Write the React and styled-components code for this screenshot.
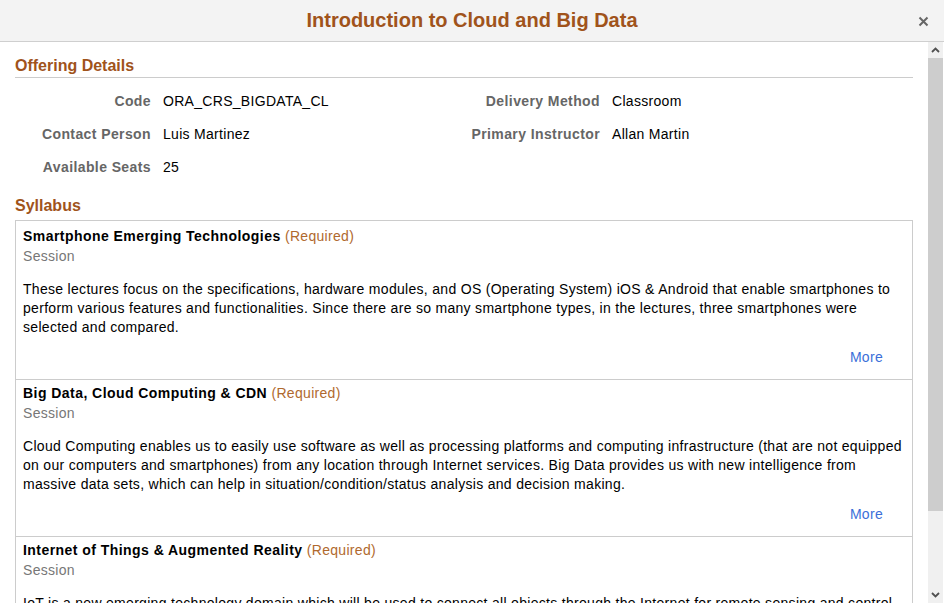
import React from "react";
import styled, { createGlobalStyle } from "styled-components";

const Global = createGlobalStyle`
  html, body { margin: 0; padding: 0; background: #fff; }
  body { font-family: "Liberation Sans", Arial, sans-serif; color: #000; }
`;

const Dialog = styled.div`
  width: 944px;
  height: 608px;
  display: flex;
  flex-direction: column;
  background: #fff;
  overflow: hidden;
`;

const Header = styled.div`
  position: relative;
  height: 41px;
  flex: none;
  background: #f3f3f3;
  border-bottom: 1px solid #cfcfcf;
  display: flex;
  align-items: center;
  justify-content: center;
`;

const Title = styled.h1`
  margin: 0;
  font-size: 20px;
  font-weight: bold;
  color: #a0531b;
`;

const Close = styled.button`
  position: absolute;
  right: 15px;
  top: 15px;
  width: 12px;
  height: 12px;
  padding: 0;
  border: 0;
  background: none;
  display: flex;
  align-items: center;
  justify-content: center;
`;

const Body = styled.div`
  height: 561px;
  flex: none;
  display: flex;
`;

const Content = styled.div`
  flex: 1;
  overflow: hidden;
  padding: 0 15px;
`;

const SectionTitle = styled.h2`
  margin: ${(p) => p.$mt}px 0 0;
  font-size: 16px;
  line-height: 20px;
  font-weight: bold;
  color: #a0531b;
  padding-bottom: ${(p) => (p.$rule ? 1 : 0)}px;
  border-bottom: ${(p) => (p.$rule ? "1px solid #cccccc" : "none")};
`;

const Fields = styled.div`
  margin-top: 6px;
  display: grid;
  grid-template-columns: 449px 1fr;
  align-items: start;
`;

const FieldGroup = styled.div`
  display: grid;
  grid-template-columns: 136px 1fr;
  column-gap: 12px;
  grid-auto-rows: 33px;
  align-items: center;
`;

const Label = styled.div`
  text-align: right;
  font-size: 14px;
  font-weight: bold;
  letter-spacing: 0.4px;
  color: #666666;
  white-space: nowrap;
`;

const Value = styled.div`
  font-size: 14px;
  letter-spacing: 0.3px;
  color: #000;
`;

const Box = styled.div`
  margin-top: 4px;
  border: 1px solid #cccccc;
`;

const Item = styled.div`
  padding: 3px 4px 12px 7px;
  & + & { border-top: 1px solid #cccccc; }
  &:first-child { padding-top: 5px; }
`;

const ItemTitle = styled.div`
  font-size: 14px;
  line-height: 20px;
  font-weight: bold;
  letter-spacing: 0.45px;
  color: #000;
`;

const Required = styled.span`
  font-weight: normal;
  letter-spacing: 0.3px;
  color: #b0692e;
`;

const Kind = styled.div`
  font-size: 14px;
  line-height: 20px;
  letter-spacing: 0.3px;
  color: #777777;
`;

const Desc = styled.p`
  margin: 14px 0 0;
  font-size: 14px;
  line-height: 19px;
  letter-spacing: 0.3px;
  color: #000;
`;

const MoreRow = styled.div`
  margin-top: 10px;
  display: flex;
  justify-content: flex-end;
  padding-right: 25px;
`;

const More = styled.a`
  font-size: 14px;
  line-height: 20px;
  letter-spacing: 0.3px;
  color: #3b6fd9;
  text-decoration: none;
  cursor: pointer;
`;

const Scrollbar = styled.div`
  width: 15px;
  flex: none;
  margin-right: 1px;
  background: #f0f0f0;
  display: flex;
  flex-direction: column;
`;

const Arrow = styled.div`
  height: 16px;
  flex: none;
  display: flex;
  align-items: center;
  justify-content: center;
`;

const Thumb = styled.div`
  height: 453px;
  flex: none;
  background: #cdcdcd;
`;

const Track = styled.div`
  flex: 1;
`;

const Footer = styled.div`
  flex: 1;
  background: #fff;
`;

const Chevron = ({ up }) => (
  <svg width="9" height="6" viewBox="0 0 9 6">
    <path
      d={up ? "M1 5 L4.5 1.5 L8 5" : "M1 1 L4.5 4.5 L8 1"}
      fill="none"
      stroke="#505050"
      strokeWidth="1.8"
    />
  </svg>
);

const items = [
  {
    title: "Smartphone Emerging Technologies",
    text:
      "These lectures focus on the specifications, hardware modules, and OS (Operating System) iOS & Android that enable smartphones to perform various features and functionalities. Since there are so many smartphone types, in the lectures, three smartphones were selected and compared.",
  },
  {
    title: "Big Data, Cloud Computing & CDN",
    text:
      "Cloud Computing enables us to easily use software as well as processing platforms and computing infrastructure (that are not equipped on our computers and smartphones) from any location through Internet services. Big Data provides us with new intelligence from massive data sets, which can help in situation/condition/status analysis and decision making.",
  },
  {
    title: "Internet of Things & Augmented Reality",
    text:
      "IoT is a new emerging technology domain which will be used to connect all objects through the Internet for remote sensing and control. AR technology enables the user to see information overlaid on the real world.",
  },
];

export default function App() {
  return (
    <>
      <Global />
      <Dialog>
        <Header>
          <Title>Introduction to Cloud and Big Data</Title>
          <Close aria-label="Close">
            <svg width="11" height="11" viewBox="0 0 11 11">
              <path d="M1.5 1.5 L9.5 9.5 M9.5 1.5 L1.5 9.5" stroke="#666" strokeWidth="2" />
            </svg>
          </Close>
        </Header>
        <Body>
          <Content>
            <SectionTitle $mt={14} $rule>
              Offering Details
            </SectionTitle>
            <Fields>
              <FieldGroup>
                <Label>Code</Label>
                <Value>ORA_CRS_BIGDATA_CL</Value>
                <Label>Contact Person</Label>
                <Value>Luis Martinez</Value>
                <Label>Available Seats</Label>
                <Value>25</Value>
              </FieldGroup>
              <FieldGroup>
                <Label>Delivery Method</Label>
                <Value>Classroom</Value>
                <Label>Primary Instructor</Label>
                <Value>Allan Martin</Value>
              </FieldGroup>
            </Fields>
            <SectionTitle $mt={13}>Syllabus</SectionTitle>
            <Box>
              {items.map((it) => (
                <Item key={it.title}>
                  <ItemTitle>
                    {it.title} <Required>(Required)</Required>
                  </ItemTitle>
                  <Kind>Session</Kind>
                  <Desc>{it.text}</Desc>
                  <MoreRow>
                    <More>More</More>
                  </MoreRow>
                </Item>
              ))}
            </Box>
          </Content>
          <Scrollbar>
            <Arrow>
              <Chevron up />
            </Arrow>
            <Thumb />
            <Track />
            <Arrow>
              <Chevron />
            </Arrow>
          </Scrollbar>
        </Body>
        <Footer />
      </Dialog>
    </>
  );
}
